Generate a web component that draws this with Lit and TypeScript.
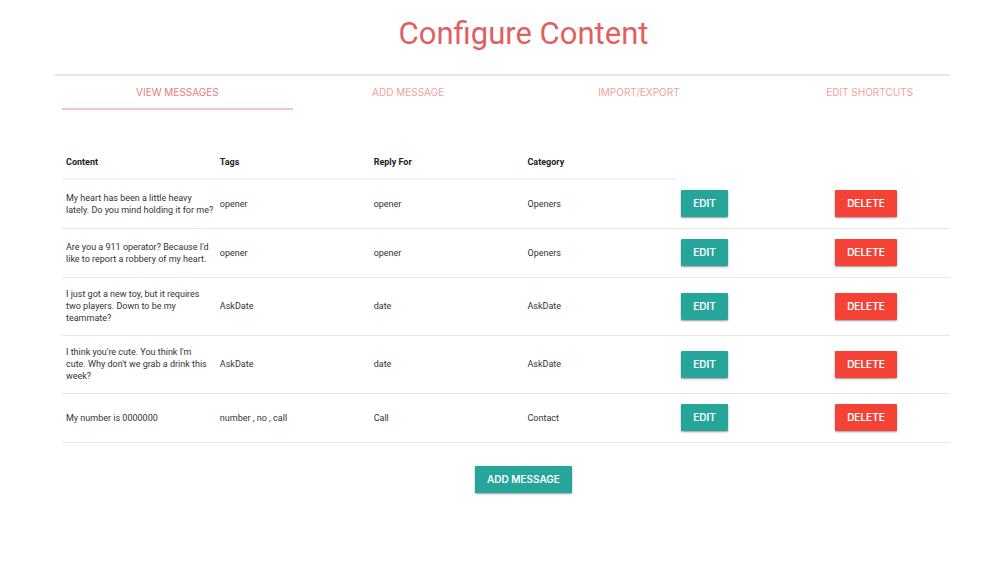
import { LitElement, html, css } from "lit";
import { customElement, state } from "lit/decorators.js";

interface Message {
  content: string;
  tags: string;
  replyFor: string;
  category: string;
}

const TABS = ["View Messages", "Add Message", "Import/Export", "Edit Shortcuts"];

const MESSAGES: Message[] = [
  { content: "My heart has been a little heavy\nlately. Do you mind holding it for me?", tags: "opener", replyFor: "opener", category: "Openers" },
  { content: "Are you a 911 operator? Because I'd\nlike to report a robbery of my heart.", tags: "opener", replyFor: "opener", category: "Openers" },
  { content: "I just got a new toy, but it requires\ntwo players. Down to be my\nteammate?", tags: "AskDate", replyFor: "date", category: "AskDate" },
  { content: "I think you're cute. You think I'm\ncute. Why don't we grab a drink this\nweek?", tags: "AskDate", replyFor: "date", category: "AskDate" },
  { content: "My number is 0000000", tags: "number , no , call", replyFor: "Call", category: "Contact" },
];

@customElement("app-root")
export class AppRoot extends LitElement {
  @state() private active = 0;

  static styles = css`
    :host {
      display: block;
      min-height: 100vh;
      background: #fff;
      color: #333;
      font-family: Roboto, "Liberation Sans", sans-serif;
      font-size: 9px;
      line-height: 12px;
    }
    * {
      box-sizing: border-box;
    }
    .page {
      margin: 0 50px 0 54px;
      padding: 13px 0 32px 8px;
      overflow: hidden;
    }
    .sheet {
      margin-right: -35px;
    }
    .title {
      margin: 0 0 19px;
      color: #e05f5f;
      font-size: 31px;
      line-height: 42px;
      font-weight: 400;
      text-align: center;
    }
    .rule {
      height: 2px;
      margin: 0 0 0 -8px;
      border: 0;
      background: #e8e8e8;
    }
    .tabs {
      display: flex;
      margin-bottom: 35px;
    }
    .tab {
      flex: 1;
      height: 34px;
      border-bottom: 2px solid transparent;
      color: #eea0a2;
      font-family: Inter, "Liberation Sans", sans-serif;
      font-size: 10px;
      line-height: 33px;
      text-align: center;
      text-decoration: none;
      text-transform: uppercase;
    }
    .tab.active {
      border-color: #f2c4c7;
      color: #e77b7f;
    }
    .table {
      width: 100%;
      table-layout: fixed;
      border-collapse: separate;
      border-spacing: 0;
    }
    .head {
      height: 35px;
      padding: 0 4px;
      border-bottom: 2px solid #f3f3f3;
      color: #222;
      font-weight: 700;
      text-align: left;
    }
    .blank {
      padding: 0;
    }
    .cell {
      padding: 10px 2px 11px 4px;
      border-bottom: 1px solid #e6e6e6;
      vertical-align: middle;
    }
    .message {
      white-space: pre-line;
    }
    .btn {
      display: block;
      height: 27px;
      padding: 0 12px;
      border: 0;
      border-radius: 1px;
      background: #26a69a;
      box-shadow: 0 1px 2px rgba(0, 0, 0, 0.4);
      color: #fff;
      font: 600 10px/27px Inter, "Liberation Sans", sans-serif;
      text-transform: uppercase;
      cursor: pointer;
    }
    .btn.danger {
      background: #f44336;
    }
    .footer {
      display: flex;
      justify-content: center;
      padding-top: 23px;
    }
  `;

  render() {
    return html`
      <main class="page">
        <div class="sheet">
          <h1 class="title">Configure Content</h1>
          <hr class="rule" />
          <nav class="tabs">
            ${TABS.map(
              (tab, i) => html`<a
                class="tab ${i === this.active ? "active" : ""}"
                href="#"
                @click=${(e: Event) => {
                  e.preventDefault();
                  this.active = i;
                }}
                >${tab}</a
              >`
            )}
          </nav>
          <table class="table">
            <thead>
              <tr>
                <th class="head" scope="col">Content</th>
                <th class="head" scope="col">Tags</th>
                <th class="head" scope="col">Reply For</th>
                <th class="head" scope="col">Category</th>
                <td class="blank"></td>
                <td class="blank"></td>
              </tr>
            </thead>
            <tbody>
              ${MESSAGES.map(
                (m) => html`<tr>
                  <td class="cell message">${m.content}</td>
                  <td class="cell">${m.tags}</td>
                  <td class="cell">${m.replyFor}</td>
                  <td class="cell">${m.category}</td>
                  <td class="cell"><button class="btn" type="button">Edit</button></td>
                  <td class="cell"><button class="btn danger" type="button">Delete</button></td>
                </tr>`
              )}
            </tbody>
          </table>
          <div class="footer">
            <button class="btn" type="button">Add Message</button>
          </div>
        </div>
      </main>
    `;
  }
}
